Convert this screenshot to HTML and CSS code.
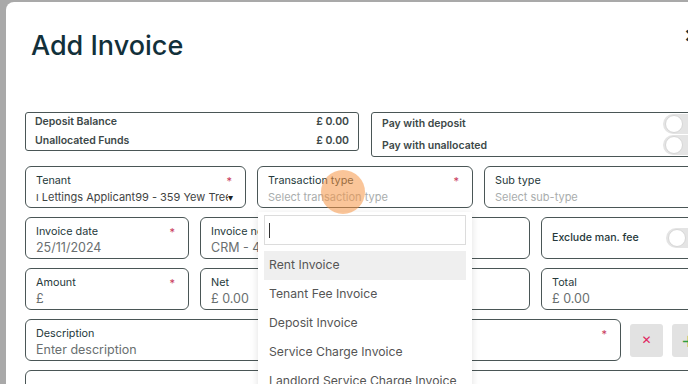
FILE: index.html
```html
<!DOCTYPE html>
<html lang="en">
<head>
  <meta charset="UTF-8">
  <title>Add Invoice</title>
  <link rel="stylesheet" href="styles.css">
</head>
<body>
  <div class="backdrop">
    <div class="modal">
      <div class="modal-header">
        <h1>Add Invoice</h1>
        <span class="close">&#x2715;</span>
      </div>

      <div class="form">
        <div class="row row-top">
          <div class="summary">
            <div class="summary-line"><span>Deposit Balance</span><span>£ 0.00</span></div>
            <div class="summary-line"><span>Unallocated Funds</span><span>£ 0.00</span></div>
          </div>
          <div class="summary pay">
            <div class="pay-line"><span>Pay with deposit</span><span class="toggle"></span></div>
            <div class="pay-line"><span>Pay with unallocated</span><span class="toggle"></span></div>
          </div>
        </div>

        <div class="row row-2">
          <div class="field">
            <div class="label">Tenant <span class="req">*</span></div>
            <div class="value dark select">
              <span class="clip">ı Lettings Applicant99 - 359 Yew Tree Cottage</span><span class="caret">▾</span>
            </div>
          </div>
          <div class="field">
            <div class="label">Transaction type <span class="req">*</span></div>
            <div class="value muted">Select transaction type</div>
          </div>
          <div class="field">
            <div class="label">Sub type</div>
            <div class="value muted">Select sub-type</div>
          </div>
        </div>

        <div class="row row-4">
          <div class="field">
            <div class="label">Invoice date <span class="req">*</span></div>
            <div class="value">25/11/2024</div>
          </div>
          <div class="field">
            <div class="label">Invoice no</div>
            <div class="value">CRM - 4</div>
          </div>
          <div class="field">
            <div class="label">&nbsp;</div>
            <div class="value">&nbsp;</div>
          </div>
          <div class="field switch-field">
            <span class="label">Exclude man. fee</span>
            <span class="toggle"></span>
          </div>
        </div>

        <div class="row row-4">
          <div class="field">
            <div class="label">Amount <span class="req">*</span></div>
            <div class="value">£</div>
          </div>
          <div class="field">
            <div class="label">Net</div>
            <div class="value">£ 0.00</div>
          </div>
          <div class="field">
            <div class="label">VAT</div>
            <div class="value">£ 0.00</div>
          </div>
          <div class="field">
            <div class="label">Total</div>
            <div class="value">£ 0.00</div>
          </div>
        </div>

        <div class="row row-desc">
          <div class="field">
            <div class="label">Description <span class="req">*</span></div>
            <div class="value">Enter description</div>
          </div>
          <button class="icon-btn remove">&#x2715;</button>
          <button class="icon-btn add">+</button>
        </div>

        <div class="row row-last">
          <div class="field"></div>
        </div>
      </div>

      <div class="dropdown">
        <div class="search"><span class="cursor"></span></div>
        <div class="option active">Rent Invoice</div>
        <div class="option">Tenant Fee Invoice</div>
        <div class="option">Deposit Invoice</div>
        <div class="option">Service Charge Invoice</div>
        <div class="option">Landlord Service Charge Invoice</div>
      </div>

      <div class="click-dot"></div>
    </div>
  </div>
</body>
</html>
```

FILE: styles.css
```css
body {
  margin: 0;
  background-color: #a9a9a9;
  font-family: 'Inter', 'Noto Sans', sans-serif;
  overflow: hidden;
  height: 384px;
}

.backdrop {
  padding: 2px 0 0 6px;
}

.modal {
  position: relative;
  background-color: white;
  border-radius: 8px 0 0 0;
  width: 724px;
  height: 420px;
  padding: 0 25px 0 19px;
  box-sizing: border-box;
}

.modal-header {
  display: flex;
  justify-content: space-between;
  align-items: center;
  height: 86px;
  padding: 0 6px 0 6px;
}

.modal-header h1 {
  margin: 0;
  font-size: 27px;
  font-weight: 500;
  color: #12303a;
}

.close {
  align-self: flex-start;
  margin-top: 23px;
  font-size: 18px;
  font-weight: 700;
  color: #12303a;
}

.form {
  display: flex;
  flex-direction: column;
  gap: 9px;
  margin-top: 24px;
}

.row {
  display: grid;
  gap: 12px;
  height: 42px;
}

.row-top {
  grid-template-columns: 334px 1fr;
  height: 45px;
}

.row-2 {
  grid-template-columns: 221px 216px 1fr;
  gap: 11px;
}

.row-4 {
  grid-template-columns: 164px 164px 155px 1fr;
  gap: 11px;
}

.row-desc {
  grid-template-columns: 596px 33px 33px;
  gap: 9px;
}

.row-last {
  grid-template-columns: 1fr;
}

.summary {
  border: 1px solid #4a5656;
  border-radius: 3px;
  height: 39px;
  box-sizing: border-box;
  padding: 0 9px;
  font-size: 10.5px;
  font-weight: 600;
  color: #3c4848;
}

.summary-line {
  display: flex;
  justify-content: space-between;
  height: 18.5px;
  line-height: 18.5px;
}

.summary.pay {
  height: 45px;
  padding: 0 0 0 10px;
  overflow: hidden;
}

.pay-line {
  display: flex;
  justify-content: space-between;
  align-items: center;
  height: 21.5px;
}

.toggle {
  position: relative;
  width: 38px;
  height: 20px;
  border-radius: 10px;
  background-color: #e4e4e4;
  flex: none;
}

.pay .toggle {
  width: 47px;
  margin-right: -6px;
}

.toggle::before {
  content: '';
  position: absolute;
  left: 2px;
  top: 1px;
  width: 16px;
  height: 16px;
  border-radius: 50%;
  background-color: white;
  border: 1px solid #d6d6d6;
}

.field {
  border: 1px solid #4a5656;
  border-radius: 6px;
  padding: 6px 10px 0 10px;
  box-sizing: border-box;
  overflow: hidden;
}

.label {
  display: flex;
  justify-content: space-between;
  font-size: 10.8px;
  line-height: 16px;
  color: #26393b;
}

.req {
  color: #c8385a;
  font-size: 11px;
  margin-right: 3px;
}

.value {
  font-size: 12.5px;
  line-height: 16px;
  color: #6a6f70;
  white-space: nowrap;
}

.value.dark {
  color: #3f4444;
  font-size: 11px;
}

.value.muted {
  color: #a9adad;
  font-size: 11px;
}

.select {
  display: flex;
  align-items: center;
}

.clip {
  overflow: hidden;
  width: 192px;
  flex: none;
}

.caret {
  font-size: 10px;
  color: #222;
}

.switch-field {
  display: flex;
  align-items: center;
  justify-content: space-between;
  padding: 0 0 0 10px;
}

.switch-field .label {
  font-weight: 500;
  font-size: 10.6px;
}

.icon-btn {
  align-self: center;
  width: 33px;
  height: 33px;
  border: none;
  border-radius: 3px;
  background-color: #e2e2e2;
  font-family: 'DejaVu Sans', sans-serif;
  padding: 0;
}

.icon-btn.remove {
  color: #e0245e;
  font-size: 12px;
}

.icon-btn.add {
  color: #2e9e3e;
  font-size: 18px;
}

.dropdown {
  position: absolute;
  left: 252px;
  top: 210px;
  width: 214px;
  height: 200px;
  background-color: white;
  box-shadow: 0 2px 8px rgba(0, 0, 0, 0.12);
  padding: 3px 6px 0 6px;
  box-sizing: border-box;
}

.search {
  height: 30px;
  border: 1px solid #dcdcdc;
  box-sizing: border-box;
  position: relative;
  margin-bottom: 6px;
}

.cursor {
  position: absolute;
  left: 4px;
  top: 7px;
  width: 1px;
  height: 15px;
  background-color: #333;
}

.option {
  height: 29px;
  line-height: 28px;
  padding-left: 5px;
  font-size: 12.2px;
  color: #555;
  white-space: nowrap;
}

.option.active {
  background-color: #efefef;
}

.click-dot {
  position: absolute;
  left: 315px;
  top: 168px;
  width: 44px;
  height: 44px;
  border-radius: 50%;
  background-color: rgba(245, 150, 70, 0.55);
}
```
